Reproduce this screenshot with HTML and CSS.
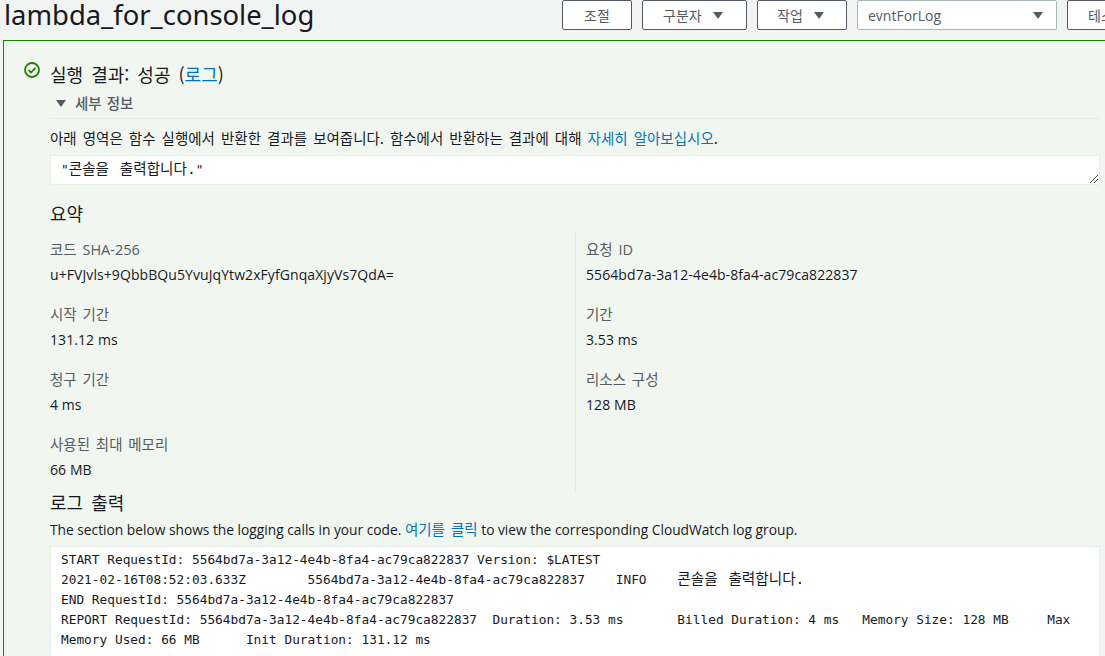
FILE: index.html
```html
<!DOCTYPE html>
<html lang="ko">
<head>
<meta charset="utf-8">
<title>lambda_for_console_log</title>
<link rel="stylesheet" href="styles.css">
</head>
<body>
<header class="top">
  <h1 class="title">lambda_for_console_log</h1>
  <div class="actions">
    <button class="btn btn-plain">조절</button>
    <button class="btn btn-split">구분자<svg class="caret" viewBox="0 0 12 9"><path d="M1 1h10L6 8z"/></svg></button>
    <button class="btn btn-act">작업<svg class="caret" viewBox="0 0 12 9"><path d="M1 1h10L6 8z"/></svg></button>
    <div class="select"><span>evntForLog</span><svg class="caret" viewBox="0 0 12 9"><path d="M1 1h10L6 8z"/></svg></div>
    <button class="btn btn-test">테스트</button>
  </div>
</header>
<main class="panel">
  <div class="status">
    <svg class="ok" viewBox="0 0 16 16"><circle cx="8" cy="8" r="7" fill="none" stroke="#1d8102" stroke-width="1.8"/><path d="M4.6 8.1l2.4 2.4 4.4-4.6" fill="none" stroke="#1d8102" stroke-width="1.8"/></svg>
    <h2 class="status-title">실행 결과: 성공 (<a href="#">로그</a>)</h2>
  </div>
  <div class="content">
    <div class="details"><svg class="details-caret" viewBox="0 0 12 9"><path d="M1 1h10L6 8z"/></svg><span>세부 정보</span></div>
    <p class="desc first ko">아래 영역은 함수 실행에서 반환한 결과를 보여줍니다. 함수에서 반환하는 결과에 대해 <a href="#">자세히 알아보십시오</a>.</p>
    <div class="result">"<span class="ko-mono">콘솔을 출력합니다.</span>"<svg class="grip" viewBox="0 0 10 10"><path d="M1 9l8-8M5 9l4-4" stroke="#555" fill="none"/></svg></div>
    <h3 class="section">요약</h3>
    <div class="summary">
      <div class="col col-left">
        <div class="item"><div class="label">코드 SHA-256</div><div class="value">u+FVJvls+9QbbBQu5YvuJqYtw2xFyfGnqaXjyVs7QdA=</div></div>
        <div class="item"><div class="label">시작 기간</div><div class="value">131.12 ms</div></div>
        <div class="item"><div class="label">청구 기간</div><div class="value">4 ms</div></div>
        <div class="item"><div class="label">사용된 최대 메모리</div><div class="value">66 MB</div></div>
      </div>
      <div class="col col-right">
        <div class="item"><div class="label">요청 ID</div><div class="value">5564bd7a-3a12-4e4b-8fa4-ac79ca822837</div></div>
        <div class="item"><div class="label">기간</div><div class="value">3.53 ms</div></div>
        <div class="item"><div class="label">리소스 구성</div><div class="value">128 MB</div></div>
      </div>
    </div>
    <h3 class="section section-log">로그 출력</h3>
    <p class="desc">The section below shows the logging calls in your code. <a class="ko" href="#">여기를 클릭</a> to view the corresponding CloudWatch log group.</p>
    <pre class="log">START RequestId: 5564bd7a-3a12-4e4b-8fa4-ac79ca822837 Version: $LATEST
2021-02-16T08:52:03.633Z	5564bd7a-3a12-4e4b-8fa4-ac79ca822837	INFO	<span class="ko-mono">콘솔을 출력합니다.</span>
END RequestId: 5564bd7a-3a12-4e4b-8fa4-ac79ca822837
REPORT RequestId: 5564bd7a-3a12-4e4b-8fa4-ac79ca822837	Duration: 3.53 ms	Billed Duration: 4 ms	Memory Size: 128 MB	Max Memory Used: 66 MB	Init Duration: 131.12 ms
</pre>
  </div>
</main>
</body>
</html>
```
FILE: styles.css
```css
* { box-sizing: border-box; }
html, body { margin: 0; height: 656px; overflow: hidden; }
body {
  width: 1105px;
  background: #f2f3f3;
  color: #16191f;
  font-family: "Open Sans", "Noto Sans CJK KR", sans-serif;
  font-size: 14px;
}
a { color: #0073bb; text-decoration: none; }

.ko {
  font-family: "Noto Sans CJK KR", sans-serif;
  font-size: 14.5px;
  word-spacing: 2px;
}
.ko-mono {
  font-family: "DejaVu Sans Mono", "Noto Sans CJK KR", monospace;
  font-size: 14.6px;
  word-spacing: 2px;
  line-height: 1;
}

.top {
  height: 40px;
  display: flex;
  justify-content: space-between;
  overflow: hidden;
}
.title {
  margin: -2px 0 0 4px;
  font-family: "Noto Sans", "Noto Sans CJK KR", sans-serif;
  font-size: 27.4px;
  font-weight: 400;
  line-height: 34px;
  color: #16191f;
  white-space: nowrap;
}
.actions { display: flex; gap: 10px; flex: none; width: 543px; height: 30px; }
.btn, .select {
  height: 30px;
  background: #fff;
  border: 1px solid #545b64;
  border-radius: 2px;
  color: #545b64;
  font-family: "Noto Sans CJK KR", sans-serif;
  font-size: 14px;
  flex: none;
  padding: 0;
  display: flex;
  align-items: center;
  white-space: nowrap;
}
.btn-plain { width: 70px; justify-content: center; }
.btn-split { width: 105px; padding-left: 20px; }
.btn-act { width: 90px; padding-left: 19px; }
.btn-test { width: 80px; padding-left: 20px; }
.select {
  width: 200px;
  border-color: #aab7b8;
  padding: 0 12px 0 10px;
  justify-content: space-between;
  font-family: "Open Sans", sans-serif;
}
.caret { width: 12px; height: 9px; fill: #545b64; margin-left: 10px; }

.panel {
  width: 1110px;
  height: 616px;
  margin-left: 3px;
  background: #f2f6f0;
  border: 1px solid #1d8102;
  border-width: 1px 0 0 1px;
  overflow: hidden;
}
.status { display: flex; align-items: center; gap: 10px; padding: 21px 0 0 20px; height: 45px; }
.ok { width: 16px; height: 16px; margin-top: -8px; }
.status-title {
  margin: 0;
  font-size: 18px;
  font-weight: 400;
  line-height: 24px;
  word-spacing: 3px;
  font-family: "Noto Sans CJK KR", sans-serif;
}
.content { margin-left: 46px; width: 1050px; }
.details {
  height: 33px;
  border-bottom: 1px solid #e6ebe6;
  padding: 7px 0 0 5px;
  display: flex;
  align-items: flex-start;
  gap: 8px;
  color: #545b64;
  font-size: 14.5px;
  word-spacing: 1px;
  font-weight: 500;
  font-family: "Noto Sans CJK KR", sans-serif;
  line-height: 20px;
}
.details-caret { width: 12px; height: 9px; fill: #545b64; margin-top: 6px; }
.desc {
  margin: 0;
  font-size: 13.76px;
  line-height: 20px;
  color: #16191f;
  font-family: "Open Sans", "Noto Sans CJK KR", sans-serif;
}
.desc.first { padding-top: 9px; height: 36px; font-size: 14.5px; font-family: "Noto Sans CJK KR", sans-serif; }
.result {
  position: relative;
  height: 30px;
  background: #fff;
  border: 1px solid #e9eeea;
  padding: 0 10px;
  font-family: "DejaVu Sans Mono", "Noto Sans CJK KR", monospace;
  font-size: 12.8px;
  line-height: 28px;
}
.grip { position: absolute; right: 0; bottom: 0; width: 10px; height: 10px; }
.section {
  margin: 0;
  font-size: 18px;
  font-weight: 400;
  line-height: 24px;
  padding-top: 16px;
  height: 48px;
  font-family: "Noto Sans CJK KR", sans-serif;
}
.summary { display: grid; grid-template-columns: 526px 1fr; height: 260px; margin: -1px 0 -2px; }
.col { padding-top: 5px; }
.col-left { border-right: 1px solid #e6ebe6; }
.col-right { padding-left: 10px; }
.item { height: 65px; padding-top: 1px; }
.item:last-child { height: 60px; }
.label {
  color: #545b64;
  font-size: 14.5px;
  word-spacing: 2px;
  line-height: 24px;
  font-family: "Open Sans", "Noto Sans CJK KR", sans-serif;
}
.value { font-size: 14px; letter-spacing: 0.08px; line-height: 24px; margin-top: 1px; color: #16191f; }
.section-log { padding-top: 0; height: 29px; word-spacing: 3px; }
.log {
  margin: 6px 0 0;
  background: #fff;
  border: 1px solid #e9eeea;
  padding: 3px 10px;
  height: 120px;
  font-family: "DejaVu Sans Mono", "Noto Sans CJK KR", monospace;
  font-size: 12.8px;
  line-height: 20px;
  white-space: pre-wrap;
  tab-size: 8;
  color: #16191f;
}
```
